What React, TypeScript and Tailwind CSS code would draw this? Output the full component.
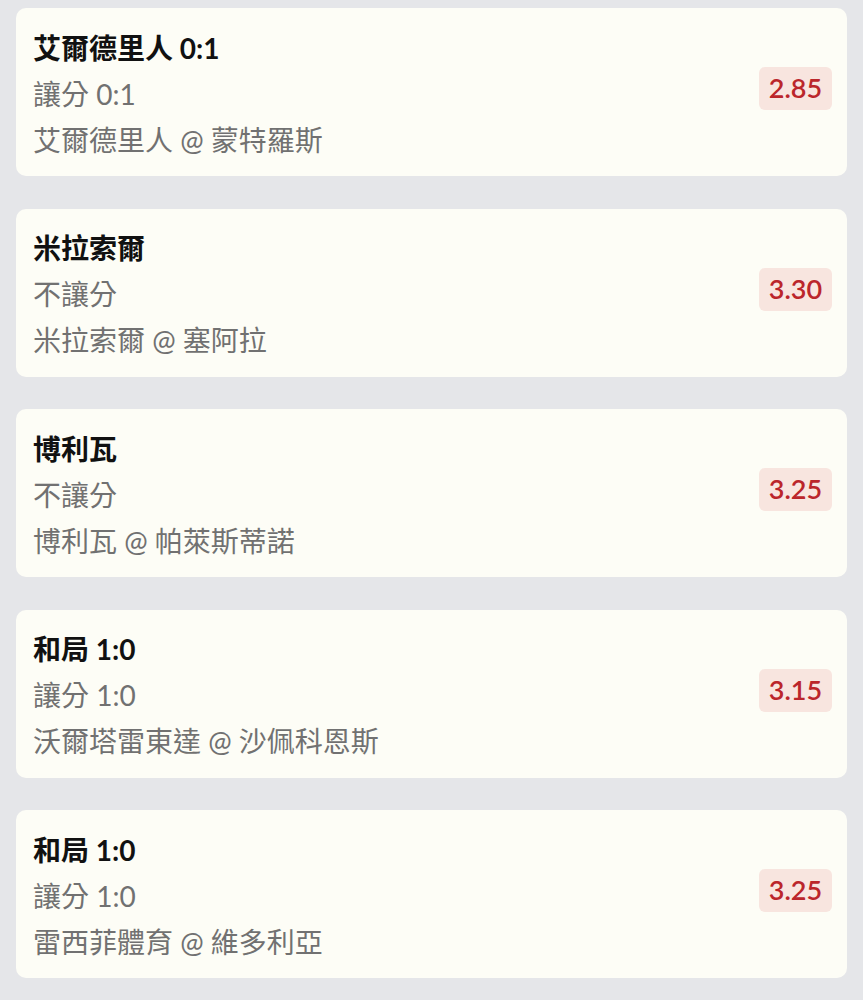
import React from "react";

type Item = { title: string; line: string; match: string; odds: string };

const items: Item[] = [
  { title: "艾爾德里人 0:1", line: "讓分 0:1", match: "艾爾德里人 @ 蒙特羅斯", odds: "2.85" },
  { title: "米拉索爾", line: "不讓分", match: "米拉索爾 @ 塞阿拉", odds: "3.30" },
  { title: "博利瓦", line: "不讓分", match: "博利瓦 @ 帕萊斯蒂諾", odds: "3.25" },
  { title: "和局 1:0", line: "讓分 1:0", match: "沃爾塔雷東達 @ 沙佩科恩斯", odds: "3.15" },
  { title: "和局 1:0", line: "讓分 1:0", match: "雷西菲體育 @ 維多利亞", odds: "3.25" },
];

export default function App() {
  return (
    <div
      className="min-h-[1000px] w-full bg-[#e5e6e9] px-4 pt-2 flex flex-col gap-[32.5px]"
      style={{ fontFamily: "Lato, 'Noto Sans CJK TC', sans-serif" }}
    >
      {items.map((it, i) => (
        <div
          key={i}
          className="h-[168px] rounded-[10px] bg-[#fdfdf6] pl-[17px] pr-[15px] flex items-center justify-between"
        >
          <div className="flex flex-col pt-[3px]">
            <div className="text-[28px] leading-[46px] font-bold text-[#111111]">{it.title}</div>
            <div className="text-[28px] leading-[46px] text-[#717171]">{it.line}</div>
            <div className="text-[28px] leading-[46px] text-[#717171]">{it.match}</div>
          </div>
          <div className="mb-[7px] h-[43px] w-[73px] rounded-[6px] bg-[#f8e5df] flex items-center justify-center text-[27px] font-semibold text-[#bb262b]">
            {it.odds}
          </div>
        </div>
      ))}
    </div>
  );
}
